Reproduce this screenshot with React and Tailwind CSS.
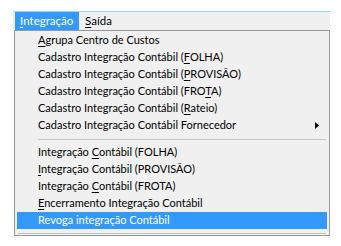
const items = [
  { pre: "", key: "A", post: "grupa Centro de Custos" },
  { pre: "Cadastro Integração Contábil (", key: "F", post: "OLHA)" },
  { pre: "Cadastro Integração Contábil (", key: "P", post: "ROVISÃO)" },
  { pre: "Cadastro Integração Contábil (FRO", key: "T", post: "A)" },
  { pre: "Cadastro Integração Contábil (", key: "R", post: "ateio)" },
  { pre: "Cadastro Integração Contábil Fornecedor", key: "", post: "", sub: true },
  { sep: true },
  { pre: "Integração ", key: "C", post: "ontábil (FOLHA)" },
  { pre: "", key: "I", post: "ntegração Contábil (PROVISÃO)" },
  { pre: "Integração ", key: "C", post: "ontábil (FROTA)" },
  { pre: "", key: "E", post: "ncerramento Integração Contábil" },
  { pre: "Revoga integração Contábil", key: "", post: "", active: true },
];

export default function App() {
  return (
    <div
      className="w-[341px] h-[246px] bg-white pt-[11px] pl-[13px] overflow-hidden"
      style={{ fontFamily: "Lato, 'Open Sans', sans-serif" }}
    >
      {/* Menu bar */}
      <div className="w-[317px] h-[19px] bg-[#f0f0f0] border-t border-[#9bd6ef] flex items-stretch pl-[2px] text-[11.5px] text-black">
        <div className="bg-[#3399ff] text-white px-[5px] flex items-center w-[64px]">
          <span className="underline underline-offset-2">I</span>ntegração
        </div>
        <div className="px-[6px] flex items-center">
          <span className="underline underline-offset-2">S</span>aída
        </div>
      </div>

      {/* Dropdown */}
      <div className="ml-[1px] w-[316px] bg-[#f0f0f0] border border-[#979797] border-r-[#a0a0a0] pt-[1px] px-[2px] text-[11px] text-black">
        {items.map((it, i) =>
          it.sep ? (
            <div key={i} className="h-[10px] flex items-center pl-[21px] pr-[1px]">
              <div className="h-px w-full bg-[#c5c5c5]"></div>
            </div>
          ) : (
            <div
              key={i}
              className={`h-[17px] flex items-center justify-between pl-[21px] pr-[8px] ${
                it.active ? "bg-[#3399ff] text-white" : ""
              }`}
            >
              <span className="whitespace-pre">
                {it.pre}
                {it.key && <span className="underline underline-offset-2">{it.key}</span>}
                {it.post}
              </span>
              {it.sub && (
                <svg width="4" height="7" viewBox="0 0 4 7">
                  <path d="M0 0 L4 3.5 L0 7 Z" fill="#000" />
                </svg>
              )}
            </div>
          )
        )}
        <div className="h-[6px] pt-[4px] pl-[1px] pr-[1px]">
          <div className="h-px w-full bg-[#c5c5c5]"></div>
        </div>
      </div>
    </div>
  );
}
